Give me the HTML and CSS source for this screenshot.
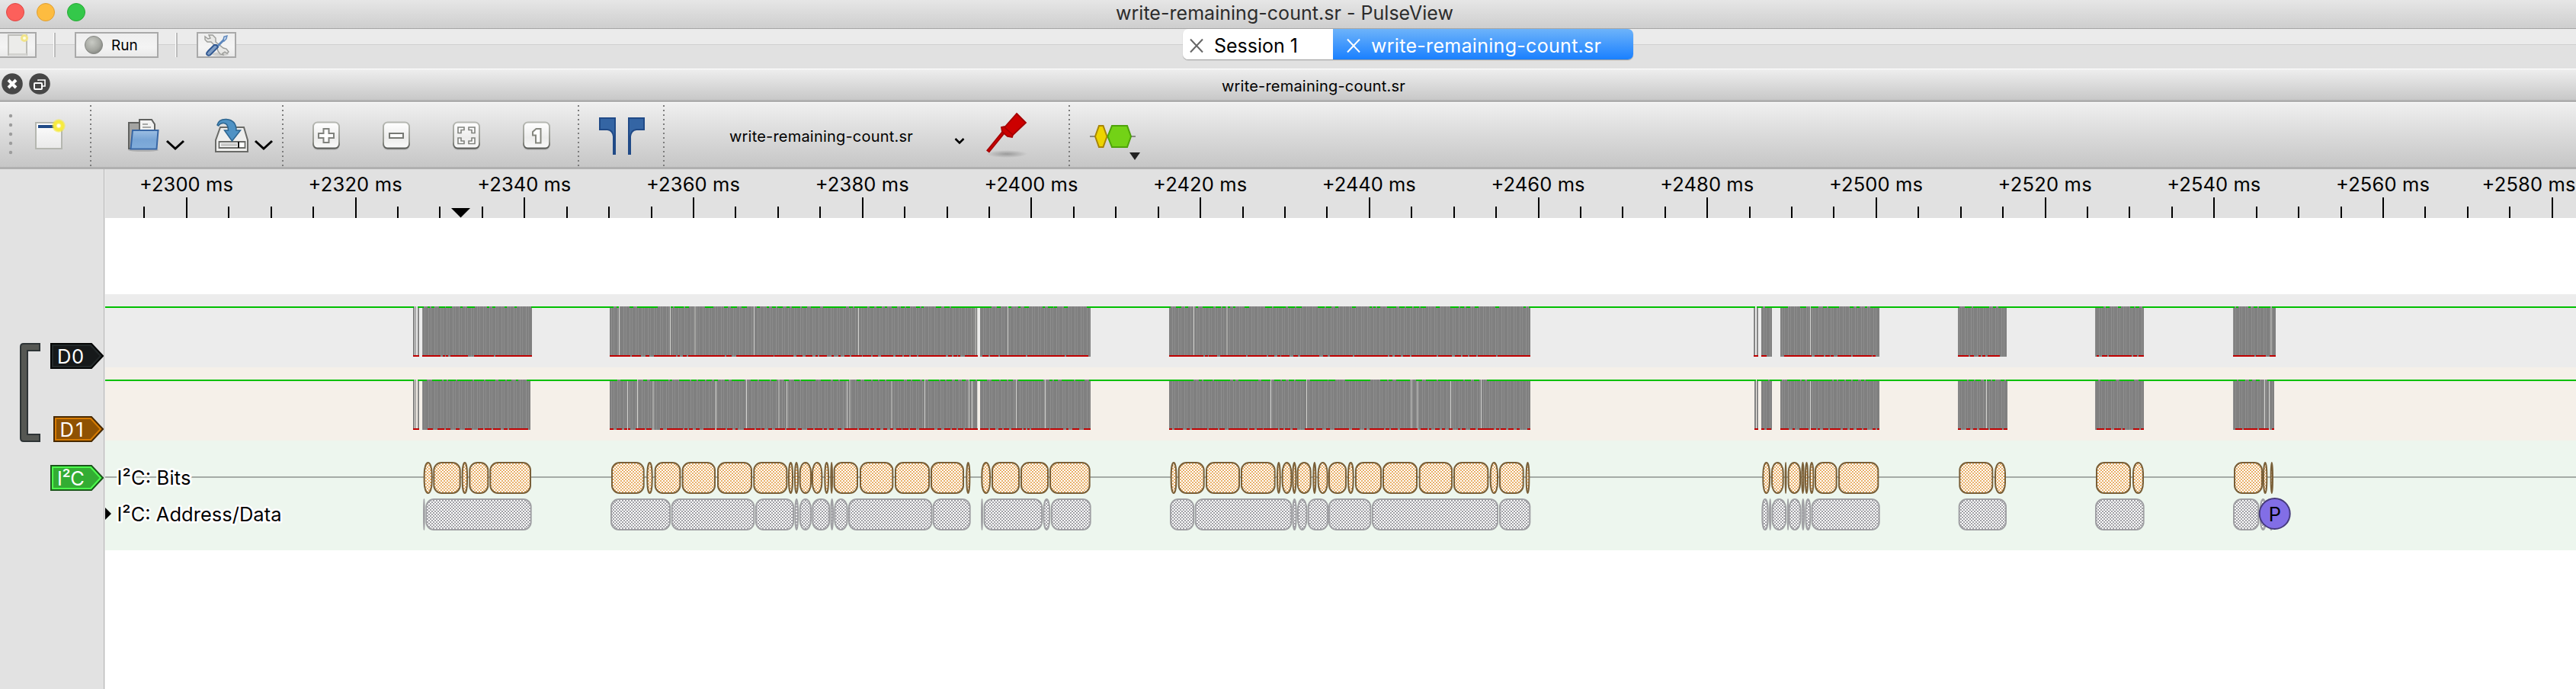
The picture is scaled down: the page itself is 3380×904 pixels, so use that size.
FILE: index.html
```html
<!DOCTYPE html>
<html lang="en">
<head>
<meta charset="utf-8">
<title>write-remaining-count.sr - PulseView</title>
<link rel="stylesheet" href="styles.css">
</head>
<body>
<div class="window">
  <header class="titlebar">
    <div class="lights"><i class="light close"></i><i class="light minimise"></i><i class="light maximise"></i></div>
    <h1 class="window-title">write-remaining-count.sr - PulseView</h1>
  </header>

  <section class="session-bar">
    <div class="session-tools">
      <button class="btn btn-new">
        <svg width="46" height="30" viewBox="0 44 46 30"><rect x="11" y="46" width="24" height="26" fill="#ececea" stroke="#bdbdb9" stroke-width="2"/><rect x="12" y="70" width="23" height="3" fill="#d3d3d0"/><circle cx="32" cy="50" r="5" fill="#f1e48a"/><circle cx="32" cy="50" r="2" fill="#fffde0"/></svg>
      </button>
      <i class="rule"></i>
      <button class="btn btn-run">
        <svg width="26" height="26" viewBox="0 0 26 26"><defs><radialGradient id="ball" cx=".4" cy=".35" r=".65"><stop offset="0" stop-color="#c9cbc5"/><stop offset=".7" stop-color="#a5a7a1"/><stop offset="1" stop-color="#8a8c87"/></radialGradient></defs><circle cx="13" cy="13" r="11.5" fill="url(#ball)" stroke="#858783"/></svg>
        <span>Run</span>
      </button>
      <i class="rule"></i>
      <button class="btn btn-settings">
        <svg width="48" height="30" viewBox="260 44 48 30"><ellipse cx="289" cy="71" rx="11" ry="2.5" fill="#cfcfcd"/><path d="M274 46l5 0 4 4 0 5 10 8 4 1 3 4-2 2-3-2-3 2 1 2-4-1-3-4-1-4-8-8-5 0-3-3 0-4 4 3 3-1z" fill="#e8e8e6" stroke="#9b9c99" stroke-width="1.4"/><path d="M295 51l-12 12" stroke="#5d87bd" stroke-width="3"/><path d="M293 52l1-4 4-1-1 4-3 3z" fill="#c4d5ea" stroke="#5d87bd" stroke-width="1.4"/><path d="M284 59l2 3-10 10q-3 2-5-1 0-2 2-4l8-8z" fill="#7f9dc4" stroke="#2f5690" stroke-width="1.800"/></svg>
      </button>
    </div>
    <nav class="tabs">
      <div class="tab"><svg class="tab-x" width="18" height="20" viewBox="0 0 18 20"><path d="M1 1.5l16 17M17 1.5l-16 17"/></svg><span>Session 1</span></div>
      <div class="tab active"><svg class="tab-x" width="18" height="20" viewBox="0 0 18 20"><path d="M1 1.5l16 17M17 1.5l-16 17"/></svg><span class="tab-file">write-remaining-count.sr</span></div>
    </nav>
  </section>

  <section class="dock-title">
    <svg class="dock-buttons" width="72" height="40" viewBox="0 91 72 40">
      <circle cx="16" cy="110" r="13.8" fill="#474747"/><path d="M11 105l10 10M21 105l-10 10" stroke="#fff" stroke-width="4"/>
      <circle cx="52" cy="110" r="13.8" fill="#474747"/><path d="M50 106v-1h9v8h-3" fill="none" stroke="#fff" stroke-width="1.6"/><rect x="45" y="109" width="10" height="8" rx="1" fill="none" stroke="#fff" stroke-width="2"/>
    </svg>
    <h2 class="dock-name">write-remaining-count.sr</h2>
  </section>

  <section class="toolbar">
    <svg width="30" height="84" viewBox="0 135 30 84" fill="#9c9c9c"><circle cx="14" cy="152" r="2.2"/><circle cx="14" cy="164" r="2.2"/><circle cx="14" cy="176" r="2.2"/><circle cx="14" cy="188" r="2.2"/><circle cx="14" cy="200" r="2.2"/></svg>
    <svg width="88" height="84" viewBox="30 135 88 84">
      <defs><linearGradient id="paper" x2="0" y2="1"><stop offset="0" stop-color="#fdfdfd"/><stop offset="1" stop-color="#e9e9e9"/></linearGradient><radialGradient id="glow"><stop offset="0" stop-color="#fff"/><stop offset=".2" stop-color="#fffbe0"/><stop offset=".4" stop-color="#f8ec42"/><stop offset=".7" stop-color="#f6ea3c"/><stop offset="1" stop-color="#f6ea3c" stop-opacity=".25"/></radialGradient></defs>
      <rect x="47" y="161" width="34" height="34" fill="url(#paper)" stroke="#b5b7b0" stroke-width="2"/><rect x="50" y="164" width="27" height="4" fill="#204a87"/><circle cx="77" cy="165" r="9" fill="url(#glow)"/>
    </svg>
    <i class="dots"></i>
    <svg width="132" height="84" viewBox="120 135 132 84">
      <defs><linearGradient id="folder" x2="0" y2="1"><stop offset="0" stop-color="#9dbfe3"/><stop offset=".5" stop-color="#78a5d6"/><stop offset="1" stop-color="#81addb"/></linearGradient></defs>
      <ellipse cx="188" cy="197" rx="20" ry="2" fill="#000" opacity=".15"/>
      <path d="M169 195v-34h15v9h17v25z" fill="#a3a3a1" stroke="#60615f" stroke-width="2"/>
      <path d="M183 176v-19h16l4 6v13z" fill="#f2f2f2" stroke="#60615f" stroke-width="2"/><path d="M187 163h7M187 167h11" stroke="#8f908e" stroke-width="1.6"/>
      <path d="M174 171h33.5l-2 24.500h-34z" fill="url(#folder)" stroke="#3867a5" stroke-width="2"/>
      <path d="M219 185l11 10 11-10" fill="none" stroke="#000" stroke-width="3"/>
    </svg>
    <svg width="118" height="84" viewBox="252 135 118 84">
      <path d="M289 167h31l5 17v15h-42v-15z" fill="#eeeeed" stroke="#6a6b68" stroke-width="2"/><path d="M287.500 186h34v8h-34z" fill="#fff" stroke="#6a6b68" stroke-width="1.8"/><rect x="290" y="188" width="21" height="4" fill="#c9c9c8"/><path d="M313 186v8" stroke="#111" stroke-width="2"/>
      <path d="M285 164q2-8 12-7.500 13 1 13 14.500h5.500l-11 14-10-14h5q0-9-6-9.500-4-.5-7 3.500z" fill="#4f92c4" stroke="#2d6590" stroke-width="1.500"/>
      <path d="M335 185l11 10 11-10" fill="none" stroke="#000" stroke-width="3"/>
    </svg>
    <i class="dots"></i>
    <svg width="102" height="84" viewBox="372 135 102 84">
      <defs><linearGradient id="key" x2="0" y2="1"><stop offset="0" stop-color="#fff"/><stop offset=".6" stop-color="#ececeb"/><stop offset="1" stop-color="#fafafa"/></linearGradient><linearGradient id="edge" x2="0" y2="1"><stop offset="0" stop-color="#b6b8b2"/><stop offset=".75" stop-color="#94968f"/><stop offset="1" stop-color="#555753"/></linearGradient>
      <g id="cap"><rect x="1" y="4" width="35" height="34" rx="6" fill="#000" opacity=".12"/><rect x="1.500" y="1.500" width="34" height="34" rx="5.500" fill="url(#key)" stroke="url(#edge)" stroke-width="2"/></g></defs>
      <use href="#cap" x="409.500" y="159"/><path d="M424.500 169h7v6h6.500v6h-6.500v6h-7v-6h-6.500v-6h6.500z" fill="#fff" stroke="#80827d" stroke-width="2"/>
    </svg>
    <svg width="96" height="84" viewBox="474 135 96 84"><use href="#cap" x="501.500" y="159"/><rect x="511" y="175" width="18" height="6" fill="#fff" stroke="#777974" stroke-width="2"/></svg>
    <svg width="94" height="84" viewBox="570 135 94 84"><use href="#cap" x="593.500" y="159"/><g fill="#fff" stroke="#80827d" stroke-width="1.600"><path d="M601 167h8v3.500h-4v4h-4zM623 167h-8v3.500h4v4h4zM601 188.500h8v-3.500h-4v-4h-4zM623 188.500h-8v-3.500h4v-4h4z"/></g></svg>
    <svg width="94" height="84" viewBox="664 135 94 84"><use href="#cap" x="685.500" y="159"/><path d="M703.500 169h6v18.500h-6.500v-10h-4v-4.500z" fill="#fff" stroke="#85877f" stroke-width="2"/></svg>
    <i class="dots"></i>
    <svg width="110" height="84" viewBox="760 135 110 84"><path d="M787 155h20v47h-2v-23q-1-8-8-9h-10z" fill="#3465a4" stroke="#204a87" stroke-width="2"/><path d="M845 155h-20v47h2v-23q1-8 8-9h10z" fill="#3465a4" stroke="#204a87" stroke-width="2"/></svg>
    <i class="dots"></i>
    <div class="device">
      <span>write-remaining-count.sr</span>
      <svg width="14" height="10" viewBox="0 0 14 10"><path d="M1.500 2l5.500 5.500L12.500 2" fill="none" stroke="#000" stroke-width="2.500"/></svg>
    </div>
    <svg width="122" height="84" viewBox="1280 135 122 84">
      <defs><radialGradient id="shade"><stop offset="0" stop-opacity=".25"/><stop offset="1" stop-opacity="0"/></radialGradient></defs>
      <ellipse cx="1321" cy="202" rx="27" ry="5" fill="url(#shade)"/>
      <path d="M1296 199l22-27" stroke="#a40000" stroke-width="5"/><path d="M1297 198l20-25" stroke="#c00" stroke-width="1.500"/>
      <path d="M1334 149l12 12-17 16-1 3-6-1-7-6-1-6 5-1z" fill="#c00" stroke="#a40000" stroke-width="1.800"/><path d="M1318 167l11 10" stroke="#a40000" stroke-width="1.500"/>
    </svg>
    <i class="dots"></i>
    <svg width="106" height="84" viewBox="1404 135 106 84">
      <path d="M1430 179h60" stroke="#888a85" stroke-width="2"/>
      <path d="M1442 165h5.500l5 14-5 14h-5.500l-5-14z" fill="#edd400" stroke="#a78507" stroke-width="2"/>
      <path d="M1459 165h20l5 14-5 14h-20l-5.500-14z" fill="#73d216" stroke="#4ea30a" stroke-width="2"/>
      <path d="M1482 200h14l-7 10z" fill="#222"/>
    </svg>
  </section>

  <main class="view">
    <aside class="channels">
      <svg width="136" height="682" viewBox="0 222 136 682">
        <path d="M52 451H31q-4 0-4 4v120q0 4 4 4h21v-9H36V460h16z" fill="#555753" stroke="#2e3436" stroke-width="2"/>
        <g class="tag"><path d="M67 451h53l15 16-15 16H67z" fill="#16191a" stroke="#050606" stroke-width="2"/><path d="M69 453h50l13 14-13 14H69z" fill="none" stroke="#23292a" stroke-width="2"/><text x="75" y="477" textLength="35">D0</text></g>
        <g class="tag"><path d="M71 547h49l15 16-15 16H71z" fill="#8f5202" stroke="#482900" stroke-width="2"/><path d="M73 549h46l13 14-13 14H73z" fill="none" stroke="#d67b03" stroke-width="2"/><text x="78.500" y="573" textLength="31">D1</text></g>
        <g class="tag"><path d="M67 611h53l15 16-15 16H67z" fill="#33ad33" stroke="#1a571a" stroke-width="2"/><path d="M69 613h50l13 14-13 14H69z" fill="none" stroke="#4dff4d" stroke-width="2"/><text x="75" y="637" textLength="36">I²C</text></g>
      </svg>
    </aside>
    <div class="plot">
      <svg id="ruler" class="ruler" width="3242" height="64" viewBox="138 222 3242 64"></svg>
      <svg id="traces" class="traces" width="3242" height="618" viewBox="138 286 3242 618">
        <defs>
          <pattern id="edges" width="8" height="8" patternUnits="userSpaceOnUse"><rect width="8" height="8" fill="#808080"/><rect x="2" width="1" height="8" fill="#8f8f8f"/><rect x="5" width="1" height="8" fill="#8b8b8b"/></pattern>
          <pattern id="bitFill" width="4" height="4" patternUnits="userSpaceOnUse"><rect width="4" height="4" fill="#fff"/><path d="M0 0h2v2h-2zM2 2h2v2h-2z" fill="#e9b16b"/></pattern>
          <pattern id="dataFill" width="4" height="4" patternUnits="userSpaceOnUse"><rect width="4" height="4" fill="#fff"/><path d="M0 0h2v2h-2zM2 2h2v2h-2z" fill="#a0a0a5"/></pattern>
        </defs>
        <rect x="138" y="386" width="3242" height="96" fill="#ececec"/>
        <rect x="138" y="482" width="3242" height="96" fill="#f5f0e9"/>
        <rect x="138" y="578" width="3242" height="144" fill="#edf6ee"/>
        <g id="signals" shape-rendering="crispEdges"></g>
        <rect x="138" y="625" width="3242" height="2" fill="#a5aca6"/>
        <g id="annotations"></g>
        <path d="M138 666l8 8-8 8z" fill="#000"/>
        <g class="row-name"><text x="153.500" y="636" textLength="97">I²C: Bits</text><text x="153.500" y="684" textLength="216">I²C: Address/Data</text></g>
        <circle cx="2984.700" cy="674" r="20" fill="#826ee6" stroke="#463b7c" stroke-width="2"/><text class="stop" x="2985" y="683.500">P</text>
      </svg>
    </div>
  </main>
</div>
<script src="view.js"></script>
</body>
</html>
```

FILE: styles.css
```css
* { box-sizing: border-box; }
body { margin: 0; background: #e2e2e2; font-family: Inter, Roboto, "Liberation Sans", sans-serif; color: #000; }
h1, h2 { margin: 0; font-weight: 400; }
svg { display: block; flex: none; }
.window { width: 3380px; height: 904px; overflow: hidden; display: flex; flex-direction: column; }

.titlebar { height: 38px; flex: none; display: grid; grid-template-columns: 1464px 1fr; background: linear-gradient(#e6e6e6, #cecece); border-bottom: 1px solid #a6a6a6; }
.lights { display: flex; gap: 16px; padding: 4px 0 0 8px; }
.light { width: 24px; height: 24px; border-radius: 50%; border: 1px solid; }
.close { background: #fc605b; border-color: #df4744; }
.minimise { background: #fdbc40; border-color: #de9f34; }
.maximise { background: #34c84a; border-color: #27aa35; }
.window-title { font-size: 25px; line-height: 34px; letter-spacing: 0.03px; color: #2c2c2c; white-space: nowrap; }

.session-bar { height: 52px; flex: none; display: flex; background: linear-gradient(#ebebeb 20px, #d0d0d0 20px, #d0d0d0 21px, #e1e1e1 21px); }
.session-tools { width: 1552px; display: flex; align-items: flex-start; padding-top: 4px; }
.btn { height: 34px; border: 2px solid #a9a9a9; padding: 0; background: linear-gradient(#eee, #f4f4f4 60%, #e9e9e9); font: inherit; color: #000; display: flex; align-items: center; }
.btn-new { width: 48px; border-left: 0; }
.rule { width: 3px; height: 32px; margin: 1px 25px 0 22px; border-left: 1px solid #fff; background: #bcbcbc; }
.btn-run { width: 110px; padding-left: 10px; gap: 10px; font-size: 19px; }
.btn-run span { padding-top: 1px; }
.btn-settings { width: 52px; }
.tabs { height: 40px; display: flex; border-radius: 7px; overflow: hidden; box-shadow: 0 1px 1px #9a9a9a; }
.tab { width: 197px; padding: 4px 0 0 9px; display: flex; align-items: center; gap: 14px; background: #fff; font-size: 25px; white-space: nowrap; }
.tab.active { width: 394px; padding-left: 18px; color: #fff; background: linear-gradient(#6db3fa, #1a80ff); }
.tab-file { letter-spacing: 0.3px; }
.tab-x { fill: none; stroke: #666; stroke-width: 2; }
.active .tab-x { stroke: #fff; }

.dock-title { height: 44px; flex: none; display: flex; border-top: 1px solid #fff; border-bottom: 3px solid #b0b0b0; background: linear-gradient(#eee, #c8c8c8); }
.dock-name { margin-left: 1531px; font-size: 20px; line-height: 44px; letter-spacing: 0.2px; white-space: nowrap; }

.toolbar { height: 88px; flex: none; display: flex; border-top: 1px solid #fff; border-bottom: 3px solid #b0b0b0; background: linear-gradient(#efefef, #c6c6c6); }
.dots { width: 2px; height: 80px; margin-top: 3px; background: repeating-linear-gradient(#7b7b7b 0 2px, transparent 2px 6px); }
.device { width: 408px; padding: 3px 14px 0 85px; display: flex; align-items: center; justify-content: space-between; font-size: 20px; letter-spacing: 0.2px; white-space: nowrap; }
.device svg { margin-top: 13px; }

.view { flex: 1; display: flex; background: #e2e2e2; }
.channels { width: 138px; flex: none; border-right: 1px solid #e8e8e8; box-shadow: inset -1px 0 #b8b8b8; }
.plot { width: 3242px; }
.ruler { background: #e1e1e1; font-size: 25.5px; text-anchor: middle; }
.traces { background: #fff; }
.tag text { font-size: 25.5px; fill: #fff; }
.row-name { font-size: 25.5px; stroke: #fff; stroke-width: 5px; stroke-linejoin: round; paint-order: stroke; }
.stop { font-size: 25.5px; text-anchor: middle; }
```

FILE: view.js
```js
const NS = 'http://www.w3.org/2000/svg';
function add(parent, tag, attrs, text) {
  const el = document.createElementNS(NS, tag);
  for (const k in attrs) el.setAttribute(k, attrs[k]);
  if (text) el.textContent = text;
  parent.appendChild(el);
}

// Ruler: major division every 20 ms, three minor divisions in between
const ruler = document.getElementById('ruler');
const STEP = 221.7;
for (let i = 0; i < 15; i++) {
  const x = 244.9 + i * STEP;
  // labels are kept inside the right edge of the view
  add(ruler, 'text', { x: Math.min(x - 0.5, 3318), y: 251, textLength: 123 }, '+' + (2300 + i * 20) + ' ms');
  add(ruler, 'rect', { x: Math.round(x) - 1, y: 259, width: 2, height: 27 });
  for (const k of [-1, 1, 2]) {
    add(ruler, 'rect', { x: Math.round(x + k * STEP / 4) - 1, y: 271, width: 2, height: 15 });
  }
}
add(ruler, 'path', { d: 'M592 273h25l-12.5 12.5z' });

// Every list holds start,end pairs in thirds of a pixel from its origin
const signals = document.getElementById('signals');
function eachPair(origin, list, fn) {
  for (let i = 0; i < list.length; i += 2) fn(origin + list[i] / 3, (list[i + 1] - list[i]) / 3);
}
const D0 = {
  top: 402,
  blocks: [[0, [1626, 1631, 1634, 1639, 1644, 1649, 1662, 2093]], [780, [60, 1509, 1518, 1953]], [1520, [42, 1464]], [2290, [33, 39, 45, 51, 63, 105, 137, 529, 837, 1029]], [2640, [327, 519, 870, 1038]]],
  gaps: [[780, [97, 298, 628, 1039, 1507, 1627]], [1520, [139]], [2290, [256]]],
  soft: [[780, [396, 1501]], [1520, [270]], [2640, [1020]]],
  high: [[0, [414, 1628, 1645, 1668, 1683, 1692, 1698, 1710, 1728, 1752, 1756, 1779, 1812, 1821, 1839, 1869, 1917, 1926, 1938, 1950, 1985, 1994, 2025, 2034, 2090, 2400]],
    [780, [0, 75, 87, 97, 137, 154, 168, 249, 300, 309, 316, 351, 358, 373, 435, 467, 510, 526, 537, 562, 579, 600, 640, 651, 677, 688, 699, 714, 720, 741, 756, 768, 777, 810, 816, 837, 852, 888, 900, 990, 1002, 1018, 1023, 1074, 1084, 1100, 1110, 1131, 1143, 1153, 1170, 1191, 1206, 1222, 1227, 1242, 1266, 1281, 1287, 1296, 1344, 1366, 1378, 1398, 1404, 1564, 1584, 1600, 1630, 1641, 1668, 1678, 1693, 1710, 1764, 1774, 1785, 1806, 1810, 1821, 1848, 1864, 1938, 2220]],
    [1520, [0, 48, 69, 90, 106, 117, 147, 156, 174, 216, 226, 247, 253, 263, 272, 282, 294, 303, 340, 357, 420, 447, 453, 501, 511, 537, 543, 564, 628, 654, 660, 681, 696, 708, 762, 777, 831, 840, 846, 856, 862, 873, 900, 936, 948, 969, 975, 999, 1005, 1026, 1032, 1053, 1092, 1107, 1149, 1181, 1187, 1203, 1212, 1228, 1245, 1260, 1326, 1341, 1437, 1446, 1458, 2310]],
    [2290, [0, 39, 45, 70, 78, 169, 217, 239, 258, 288, 306, 321, 327, 370, 412, 427, 438, 449, 470, 481, 493, 843, 864, 891, 897, 960, 976, 987, 996, 1050]],
    [2640, [0, 360, 370, 385, 418, 429, 466, 481, 487, 502, 514, 876, 882, 891, 930, 939, 951, 966, 972, 1018, 1024, 2220]]],
  low: [[0, [1626, 1649, 1662, 1735, 1742, 1752, 1756, 1764, 1773, 1843, 1866, 1944, 1950, 2093]],
    [780, [60, 141, 147, 184, 201, 216, 234, 321, 327, 336, 348, 363, 369, 514, 520, 541, 558, 704, 708, 783, 795, 820, 832, 858, 869, 879, 885, 915, 933, 942, 960, 970, 985, 1005, 1012, 1052, 1056, 1089, 1095, 1116, 1127, 1176, 1186, 1212, 1218, 1240, 1246, 1269, 1275, 1382, 1392, 1408, 1413, 1428, 1432, 1440, 1458, 1509, 1526, 1552, 1558, 1590, 1596, 1698, 1704, 1852, 1858, 1944]],
    [1520, [42, 177, 183, 194, 199, 231, 243, 345, 352, 426, 432, 456, 468, 480, 484, 516, 531, 549, 558, 633, 649, 665, 675, 765, 771, 903, 909, 920, 930, 953, 963, 990, 996, 1095, 1101, 1155, 1167, 1191, 1197, 1218, 1224, 1251, 1257, 1329, 1335, 1464]],
    [2290, [33, 51, 63, 84, 153, 262, 273, 309, 315, 332, 337, 348, 363, 417, 423, 497, 502, 513, 837, 879, 885, 900, 918, 927, 933, 944, 954, 1002]],
    [2640, [333, 343, 354, 375, 381, 471, 477, 492, 498, 519, 870, 954, 960, 998, 1014, 1038]]]
};
const D1 = {
  top: 498,
  blocks: [[0, [1626, 1631, 1634, 1639, 1644, 1649, 1662, 2089]], [780, [60, 1509, 1518, 1953]], [1520, [42, 1464]], [2290, [36, 42, 45, 51, 63, 105, 137, 529, 837, 1032]], [2640, [327, 519, 870, 1033]]],
  gaps: [[780, [130, 169, 478, 598, 757, 994, 1300, 1474, 1486, 1507, 1660, 1774]], [1520, [442, 583, 1150, 1270]], [2290, [256, 949]], [2640, [994, 1012]]],
  soft: [[780, [231, 728, 1007, 1171]], [1520, [996, 1020]]],
  high: [[0, [414, 1628, 1645, 1680, 1700, 1740, 1746, 1758, 1764, 1794, 1800, 1860, 1866, 1905, 1911, 1950, 1962, 1990, 1996, 2012, 2032, 2040, 2074, 2400]],
    [780, [0, 91, 102, 168, 192, 208, 219, 291, 297, 306, 333, 375, 381, 402, 408, 435, 442, 461, 472, 486, 513, 528, 540, 591, 615, 642, 648, 690, 696, 717, 747, 765, 786, 807, 813, 870, 892, 930, 940, 960, 966, 1002, 1031, 1047, 1062, 1089, 1095, 1116, 1122, 1143, 1149, 1218, 1230, 1245, 1252, 1281, 1289, 1299, 1314, 1356, 1362, 1381, 1387, 1408, 1419, 1430, 1446, 1461, 1476, 1500, 1506, 1546, 1563, 1594, 1600, 1623, 1629, 1648, 1668, 1767, 1792, 1803, 1808, 1824, 1840, 1887, 1893, 1930, 1947, 2220]],
    [1520, [0, 138, 160, 171, 177, 213, 219, 282, 294, 303, 315, 394, 405, 442, 456, 480, 487, 501, 514, 534, 540, 582, 597, 665, 670, 696, 735, 834, 873, 900, 906, 921, 936, 990, 1014, 1038, 1054, 1095, 1101, 1200, 1206, 1230, 1242, 1263, 1293, 2310]],
    [2290, [0, 42, 46, 90, 96, 144, 165, 216, 222, 233, 244, 342, 348, 361, 367, 390, 396, 417, 423, 444, 456, 469, 475, 873, 879, 900, 906, 927, 940, 948, 952, 966, 973, 984, 1005, 1020, 1026, 1050]],
    [2640, [0, 339, 348, 408, 424, 481, 498, 885, 892, 918, 934, 945, 960, 976, 1006, 2220]]],
  low: [[0, [1626, 1649, 1684, 1704, 1721, 1750, 1756, 1772, 1794, 1810, 1830, 1856, 1881, 1902, 1908, 1934, 1940, 1972, 1984, 1998, 2004, 2080]],
    [780, [60, 75, 87, 108, 118, 129, 132, 142, 162, 198, 204, 225, 259, 270, 286, 348, 354, 366, 372, 387, 399, 414, 429, 474, 480, 516, 522, 543, 555, 565, 588, 630, 636, 654, 658, 669, 684, 699, 711, 751, 757, 792, 802, 817, 838, 861, 867, 897, 904, 915, 925, 942, 957, 972, 984, 1035, 1041, 1080, 1086, 1101, 1110, 1125, 1137, 1152, 1164, 1177, 1187, 1209, 1212, 1237, 1243, 1266, 1278, 1339, 1350, 1365, 1377, 1400, 1406, 1425, 1431, 1452, 1458, 1509, 1519, 1551, 1557, 1578, 1590, 1605, 1611, 1632, 1642, 1683, 1689, 1698, 1704, 1713, 1719, 1790, 1793, 1845, 1857, 1866, 1881, 1908, 1926, 1953]],
    [1520, [42, 53, 63, 96, 111, 123, 132, 192, 198, 234, 240, 261, 276, 351, 357, 378, 387, 411, 414, 471, 477, 492, 498, 519, 529, 546, 577, 612, 622, 645, 660, 675, 693, 750, 761, 792, 810, 819, 831, 888, 894, 909, 915, 942, 952, 1020, 1032, 1059, 1065, 1074, 1090, 1107, 1117, 1128, 1143, 1158, 1179, 1188, 1194, 1209, 1227, 1248, 1258, 1320, 1330, 1341, 1347, 1368, 1377, 1399, 1410, 1421, 1452, 1464]],
    [2290, [36, 51, 63, 75, 84, 102, 138, 170, 186, 196, 213, 249, 258, 280, 284, 295, 306, 327, 333, 375, 384, 402, 411, 427, 438, 459, 465, 480, 501, 513, 519, 529, 837, 849, 870, 885, 896, 912, 921, 957, 963, 1011, 1017, 1032]],
    [2640, [333, 364, 370, 391, 402, 429, 434, 444, 477, 502, 508, 519, 880, 906, 912, 966, 972, 1012, 1022, 1033]]]
};
for (const s of [D0, D1]) {
  const y = s.top;
  for (const [o, l] of s.blocks) eachPair(o, l, (x, w) => add(signals, 'rect', { x: x, y: y, width: w, height: 66, fill: 'url(#edges)' }));
  for (const [o, l] of s.gaps) for (const p of l) add(signals, 'rect', { x: Math.floor(o + p / 3), y: y, width: 1, height: 66, fill: '#d2d2cf' });
  for (const [o, l] of s.soft) for (const p of l) add(signals, 'rect', { x: Math.floor(o + p / 3) - 1, y: y, width: 2, height: 66, fill: '#a5a5a3' });
  for (const [o, l] of s.high) eachPair(o, l, (x, w) => add(signals, 'rect', { x: x, y: y, width: w, height: 2, fill: '#00c000' }));
  for (const [o, l] of s.low) eachPair(o, l, (x, w) => add(signals, 'rect', { x: x, y: y + 64, width: w, height: 2, fill: '#c00000' }));
}

// Decoder annotations
const annotations = document.getElementById('annotations');
function row(groups, y, fill, stroke) {
  for (const [o, l] of groups) eachPair(o, l, (x, w) => {
    const inner = Math.max(w - 2, 0.8);
    add(annotations, 'rect', { x: x + 1, y: y, width: inner, height: 40, rx: Math.min(10, inner / 2), ry: inner < 20 ? Math.max(10, 20 - inner / 2) : 10, fill: fill, stroke: stroke, 'stroke-width': 2 });
  });
}
row([
  [0, [1667, 1703, 1705, 1814, 1817, 1842, 1846, 1924, 1927, 2091]],
  [780, [66, 197, 205, 230, 236, 340, 344, 477, 483, 621, 625, 760, 762, 783, 786, 804, 806, 855, 855, 898, 904, 924, 928, 939, 941, 1038, 1044, 1177, 1182, 1320, 1323, 1455, 1462, 1480, 1522, 1560, 1563, 1674, 1677, 1788, 1791, 1952]],
  [1520, [47, 73, 77, 182, 186, 321, 324, 461, 465, 482, 485, 526, 526, 544, 545, 602, 607, 622, 626, 668, 669, 741, 744, 770, 774, 879, 882, 1020, 1025, 1158, 1161, 1300, 1304, 1338, 1341, 1439, 1445, 1462]],
  [2290, [67, 99, 102, 152, 155, 162, 167, 219, 220, 233, 234, 249, 252, 271, 273, 362, 366, 526, 841, 976, 981, 1026]],
  [2640, [330, 468, 474, 519, 873, 987, 987, 1006, 1016, 1029]]
], 607, 'url(#bitFill)', '#795f38');
row([
  [0, [1665, 1673, 1675, 2093]],
  [780, [63, 300, 302, 631, 633, 786, 787, 804, 806, 855, 856, 927, 928, 942, 943, 998, 999, 1330, 1331, 1481, 1521, 1530, 1532, 1764, 1765, 1795, 1797, 1955]],
  [1520, [45, 141, 143, 526, 526, 545, 546, 586, 587, 669, 669, 838, 840, 1338, 1341, 1465]],
  [2290, [64, 92, 93, 103, 104, 162, 164, 171, 170, 220, 221, 234, 235, 259, 260, 530, 839, 1029]],
  [2640, [327, 521, 870, 973, 974, 1003, 1010, 1030]]
], 655, 'url(#dataFill)', '#a0a0a4');
```
